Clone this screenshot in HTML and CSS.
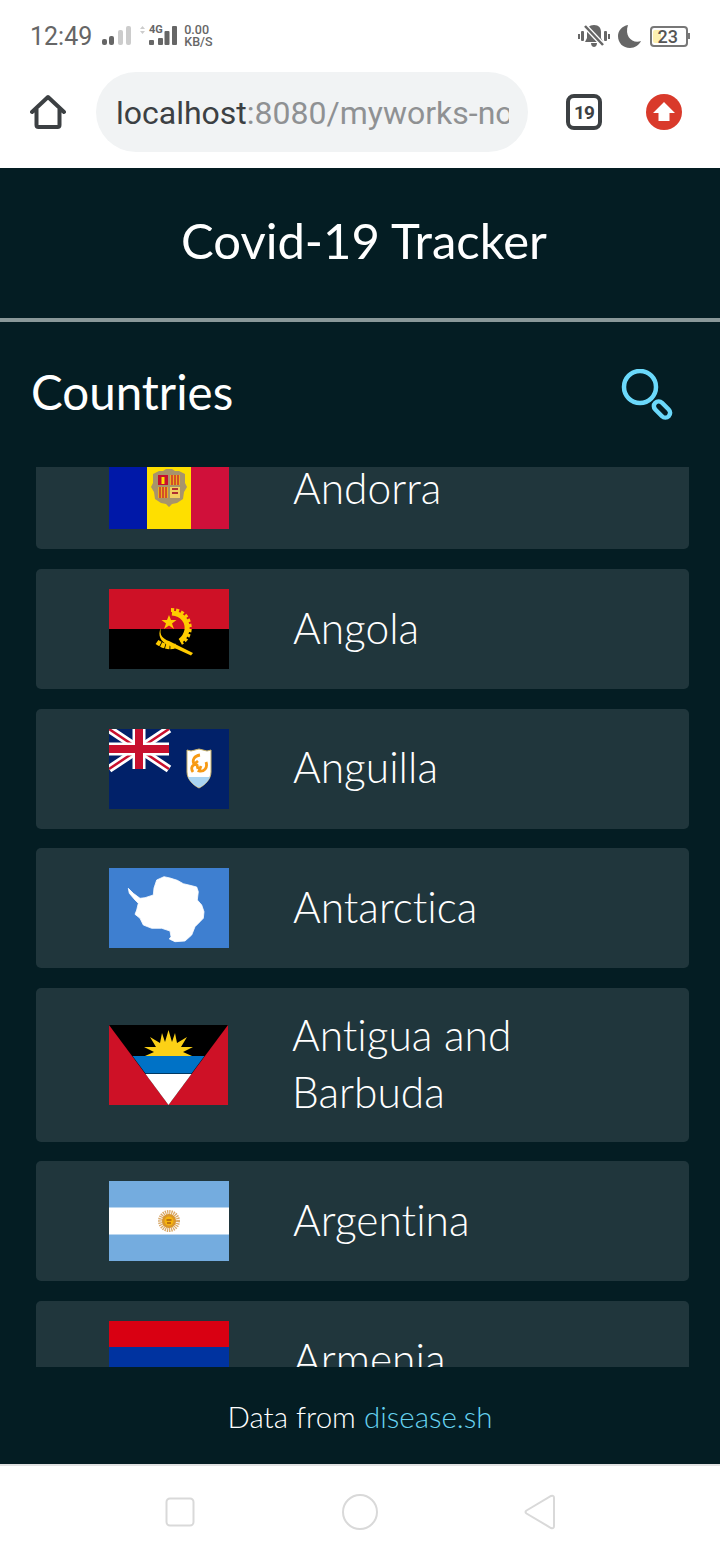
FILE: index.html
```html
<!DOCTYPE html>
<html lang="en">
<head>
    <meta charset="UTF-8">
    <meta name="viewport" content="width=device-width, initial-scale=1.0">
    <title>Covid-19 Tracker</title>
    <link rel="stylesheet" href="styles.css">
</head>
<body>
    <div class="status-bar">
        <span class="clock">12:49</span>
        <svg class="signal-a" width="32" height="24" viewBox="0 0 32 24">
            <rect x="1" y="17" width="5" height="6" rx="2" fill="#666"/>
            <rect x="8" y="14" width="5" height="9" rx="2" fill="#666"/>
            <rect x="17" y="8" width="5" height="15" rx="2" fill="#ccc"/>
            <rect x="25" y="4" width="5" height="19" rx="2" fill="#ccc"/>
        </svg>
        <svg class="signal-b" width="40" height="24" viewBox="0 0 40 24">
            <path d="M3.500 4 L6 7 H1 Z M3.500 12 L6 9 H1 Z" fill="#ccc"/>
            <text x="10" y="11" class="tiny-4g">4G</text>
            <rect x="10" y="18" width="5" height="5" rx="1" fill="#666"/>
            <rect x="19" y="16" width="5" height="7" rx="1" fill="#666"/>
            <rect x="25.500" y="9" width="5" height="14" rx="1" fill="#666"/>
            <rect x="33" y="4" width="5" height="19" rx="1" fill="#666"/>
        </svg>
        <div class="speed"><span>0.00</span><span>KB/S</span></div>
        <div class="status-right">
            <svg width="32" height="24" viewBox="0 0 32 24">
                <rect x="0" y="10" width="2" height="5" fill="#666"/>
                <rect x="3" y="7" width="3" height="10" rx="1" fill="#666"/>
                <rect x="26" y="7" width="3" height="10" rx="1" fill="#666"/>
                <rect x="30" y="10" width="2" height="5" fill="#666"/>
                <path d="M16 1 C11 1 9 4 9 8 V14 L7 18 H25 L23 14 V8 C23 4 21 1 16 1 Z M13 19 H19 C19 22 17 23 16 23 C15 23 13 22 13 19 Z" fill="#666"/>
                <path d="M7 2 L25 21" stroke="#fff" stroke-width="5"/>
                <path d="M7 2 L25 21" stroke="#666" stroke-width="2.500"/>
            </svg>
            <svg class="moon" width="24" height="24" viewBox="0 0 24 24">
                <path d="M10 1 C4 2 0 7 0 12 C0 19 5 24 12 24 C17 24 21 21 23 17 C15 20 6 13 10 1 Z" fill="#666"/>
            </svg>
            <div class="battery"><span class="battery-fill"></span><span class="battery-num">23</span></div>
        </div>
    </div>

    <div class="toolbar">
        <svg class="home-icon" width="36" height="36" viewBox="0 0 36 36">
            <path d="M2 18 L18 3 L34 18 M6.500 15 V31 Q6.500 33 8.500 33 H27.500 Q29.500 33 29.500 31 V15" fill="none" stroke="#3c4043" stroke-width="4" stroke-linecap="round" stroke-linejoin="round"/>
        </svg>
        <div class="url-pill">
            <span class="url-text">localhost<span class="url-rest">:8080/myworks-no</span></span>
        </div>
        <div class="tab-count">19</div>
        <svg class="update-icon" width="36" height="36" viewBox="0 0 36 36">
            <circle cx="18" cy="18" r="18" fill="#d93a2b"/>
            <path d="M18 8 L29 19 H23.500 V27 H12.500 V19 H7 Z" fill="#fff"/>
        </svg>
    </div>

    <div class="app">
        <header class="app-header">
            <h1>Covid-19 Tracker</h1>
        </header>
        <div class="section-head">
            <h2>Countries</h2>
            <svg class="search-icon" width="54" height="54" viewBox="0 0 54 54">
                <circle cx="21" cy="18" r="16" fill="none" stroke="#6bd9fb" stroke-width="4.500"/>
                <rect x="-4.750" y="-9.500" width="9.500" height="19" rx="4.750" transform="translate(43 40.500) rotate(-45)" fill="none" stroke="#6bd9fb" stroke-width="4.500"/>
            </svg>
        </div>

        <div class="country-list">
            <div class="country-scroll">
                <div class="country-card">
                    <svg class="flag" viewBox="0 0 120 80">
                        <rect width="38" height="80" fill="#0018a8"/>
                        <rect x="38" width="44" height="80" fill="#fedf00"/>
                        <rect x="82" width="38" height="80" fill="#d0103a"/>
                        <path d="M44 25 L50 22 H54 L57 20 H63 L66 22 H70 L76 25 V34 L78 38 L75 43 L74 50 L68 54 L63 55 L60 58 L57 55 L52 54 L46 50 L45 43 L42 38 L44 34 Z" fill="#a8946a"/>
                        <rect x="49" y="26" width="10" height="10" fill="#c7102e"/>
                        <rect x="52.500" y="28" width="3" height="7" fill="#fedf00"/>
                        <rect x="61" y="26" width="10" height="10" fill="#e8b020"/>
                        <path d="M63 26 V36 M66 26 V36 M69 26 V36" stroke="#c7102e" stroke-width="1.200"/>
                        <rect x="49" y="38" width="10" height="11" fill="#e8b020"/>
                        <path d="M51 38 V49 M54 38 V49 M57 38 V49" stroke="#c7102e" stroke-width="1.200"/>
                        <rect x="61" y="38" width="10" height="11" fill="#f2d060"/>
                        <path d="M63 40 H69 M63 44 H69" stroke="#b03030" stroke-width="2"/>
                    </svg>
                    <span class="country-name">Andorra</span>
                </div>

                <div class="country-card">
                    <svg class="flag" viewBox="0 0 120 80">
                        <rect width="120" height="40" fill="#ce1126"/>
                        <rect y="40" width="120" height="40"/>
                        <path d="M63 24 C74 25 79 33 78 41 C77 46 74 50 71 52" fill="none" stroke="#ffcb00" stroke-width="5"/>
                        <path d="M62 21 C76 21 82 32 80.500 42 C79.500 48 76 52 72 54" fill="none" stroke="#ffcb00" stroke-width="4" stroke-dasharray="3 2"/>
                        <path d="M48 53 C54 57 60 59 67 57" fill="none" stroke="#ffcb00" stroke-width="5" stroke-dasharray="4 0.800"/>
                        <path d="M52 39 C50 46 54 50 60 52 L84 64 L82 66.500 L59 56 C52 53 48 46 52 39 Z" fill="#ffcb00"/>
                        <path d="M60 26 L62 31 H67.500 L63 34.500 L65 40 L60 36.500 L55 40 L57 34.500 L52.500 31 H58 Z" fill="#ffcb00"/>
                    </svg>
                    <span class="country-name">Angola</span>
                </div>

                <div class="country-card">
                    <svg class="flag" viewBox="0 0 120 80">
                        <rect width="120" height="80" fill="#012169"/>
                        <path d="M0 0 L60 40 M60 0 L0 40" stroke="#fff" stroke-width="8"/>
                        <path d="M0 0 L60 40 M60 0 L0 40" stroke="#c8102e" stroke-width="2.500"/>
                        <path d="M30 0 V40 M0 20 H60" stroke="#fff" stroke-width="13"/>
                        <path d="M30 0 V40 M0 20 H60" stroke="#c8102e" stroke-width="8"/>
                        <path d="M78 21 L82 22 L90 20 L98 22 L102 21 V43 C102 50 96 56 90 59 C84 56 78 50 78 43 Z" fill="#fff" stroke="#c9b26a"/>
                        <path d="M79 48 H101 C99 53 94 57 90 58.500 C86 57 81 53 79 48 Z" fill="#a9d4f2"/>
                        <path d="M91 26 C85 27 83 31 85 35 L89 32 M97 33 C99 39 95 43 90 42 L92 37 M84 43 C81 39 84 34 88 36 L89 40" fill="none" stroke="#f79a14" stroke-width="2.800"/>
                    </svg>
                    <span class="country-name">Anguilla</span>
                </div>

                <div class="country-card">
                    <svg class="flag" viewBox="0 0 120 80">
                        <rect width="120" height="80" fill="#3e7fd0"/>
                        <path d="M55 8.700 L47.700 12 L45 20 L44.300 27 L36 29.700 L31 30.300 L24.300 25.300 L19.300 20.300 L20.300 25.300 L26 32 L29.300 35.300 L27.700 42 L26 46.300 L31 50.300 L34.300 57 L42.700 60.300 L52.700 60.300 L61 63 L62 68.700 L60.300 71 L66 73.700 L76 73 L82.700 67 L86 58.700 L91 53.700 L94.300 50.300 L95 43.700 L92.700 37 L88.300 32 L89.300 23.700 L87.700 19 L81 17.300 L74.300 15.700 L68.300 12.300 L61 10 Z" fill="#fff" stroke="#fff" stroke-width="0.800" stroke-linejoin="round"/>
                    </svg>
                    <span class="country-name">Antarctica</span>
                </div>

                <div class="country-card">
                    <svg class="flag flag-narrow" viewBox="0 0 119 80" preserveAspectRatio="none">
                        <rect width="119" height="80" fill="#ce1126"/>
                        <path d="M0 0 H119 L59.500 80 Z"/>
                        <path d="M36 31 L45 27 L35 22 L47 22 L41 12 L51 18 L53 8 L56 17 L59.500 5 L63 17 L66 8 L68 18 L78 12 L72 22 L84 22 L74 27 L83 31 Z" fill="#fcd116"/>
                        <path d="M23.500 31 H95.500 L82.500 48.500 H36.500 Z" fill="#0072c6"/>
                        <path d="M36.500 49 H82.500 L59.500 80 Z" fill="#fff"/>
                    </svg>
                    <span class="country-name">Antigua and Barbuda</span>
                </div>

                <div class="country-card">
                    <svg class="flag" viewBox="0 0 120 80">
                        <rect width="120" height="80" fill="#74acdf"/>
                        <rect y="26.500" width="120" height="27" fill="#fff"/>
                        <circle cx="60" cy="40" r="8.500" fill="none" stroke="#d8a868" stroke-width="5" stroke-dasharray="1.200 0.800"/>
                        <circle cx="60" cy="40" r="7" fill="#d9962a"/>
                        <circle cx="60" cy="40" r="4.500" fill="#f6b40e"/>
                        <path d="M57.500 39 H62.500 M58 42 H62" stroke="#85340a" stroke-width="1"/>
                    </svg>
                    <span class="country-name">Argentina</span>
                </div>

                <div class="country-card">
                    <svg class="flag" viewBox="0 0 120 80">
                        <rect width="120" height="27" fill="#d90012"/>
                        <rect y="26" width="120" height="27" fill="#0033a0"/>
                        <rect y="53" width="120" height="27" fill="#f2a800"/>
                    </svg>
                    <span class="country-name">Armenia</span>
                </div>
            </div>
        </div>

        <footer class="app-footer">
            <span>Data from <a class="source-link" href="#">disease.sh</a></span>
        </footer>
    </div>

    <div class="nav-bar">
        <svg width="30" height="30" viewBox="0 0 30 30">
            <rect x="1.500" y="1.500" width="27" height="27" rx="3.500" fill="none" stroke="#d9d9d9" stroke-width="2"/>
        </svg>
        <svg width="36" height="36" viewBox="0 0 36 36">
            <circle cx="18" cy="18" r="17" fill="none" stroke="#d9d9d9" stroke-width="2"/>
        </svg>
        <svg width="32" height="36" viewBox="0 0 32 36">
            <path d="M2.500 16.500 L27 2 Q30 1 30 4 V32 Q30 35 27 34 L2.500 19.500 Q0.500 18 2.500 16.500 Z" fill="none" stroke="#d9d9d9" stroke-width="2"/>
        </svg>
    </div>
</body>
</html>
```

FILE: styles.css
```css
body {
    margin: 0;
    width: 720px;
    height: 1560px;
    display: flex;
    flex-direction: column;
    overflow: hidden;
    background: #fff;
    font-family: "Lato", "Liberation Sans", sans-serif;
    font-variant-ligatures: none;
}

/* phone chrome */
.status-bar {
    height: 72px;
    display: flex;
    align-items: center;
    padding: 0 30px;
    box-sizing: border-box;
    color: #666;
    font-family: "Roboto", sans-serif;
}
.clock {
    font-size: 25px;
    margin-right: 9px;
}
.signal-a {
    margin-bottom: 4px;
}
.signal-b {
    margin-left: 6px;
    margin-bottom: 4px;
}
.tiny-4g {
    font-family: "Roboto", sans-serif;
    font-size: 11px;
    font-weight: 700;
    fill: #666;
}
.speed {
    display: flex;
    flex-direction: column;
    margin-left: 5px;
    margin-bottom: 1px;
    font-size: 12.5px;
    font-weight: 500;
    line-height: 12px;
}
.status-right {
    margin-left: auto;
    display: flex;
    align-items: center;
    gap: 8px;
}
.battery {
    position: relative;
    width: 34px;
    height: 17px;
    border: 2px solid #777;
    border-radius: 4px;
    margin-right: 2px;
    display: flex;
    align-items: center;
    justify-content: flex-end;
    padding-right: 0;
    box-sizing: content-box;
    font-size: 18px;
    font-weight: 500;
    color: #555;
}
.battery::after {
    content: "";
    position: absolute;
    right: -4px;
    top: 5px;
    width: 2px;
    height: 6px;
    background: #777;
}
.battery-fill {
    position: absolute;
    left: 1px;
    top: 2px;
    width: 8px;
    height: 13px;
    border-radius: 2px;
    background: #fdf0b0;
}
.battery-num {
    position: relative;
    margin-right: 8px;
}

.toolbar {
    height: 96px;
    display: flex;
    align-items: flex-start;
    box-sizing: border-box;
    padding-left: 30px;
}
.home-icon {
    margin-top: 22px;
}
.url-pill {
    width: 432px;
    height: 80px;
    margin-left: 30px;
    padding: 2px 19px 0 20px;
    box-sizing: border-box;
    display: flex;
    align-items: center;
    background: #f1f3f4;
    border-radius: 40px;
    overflow: hidden;
}
.url-text {
    font-family: "Roboto", sans-serif;
    font-size: 32px;
    color: #3c4043;
    white-space: nowrap;
    overflow: hidden;
}
.url-rest {
    color: #8f9193;
}
.tab-count {
    width: 36px;
    height: 36px;
    margin: 22px 0 0 38px;
    box-sizing: border-box;
    border: 4px solid #3c4043;
    border-radius: 8px;
    display: flex;
    align-items: center;
    justify-content: center;
    font-family: "Roboto", sans-serif;
    font-size: 19px;
    font-weight: 700;
    letter-spacing: -1px;
    color: #3c4043;
}
.update-icon {
    margin: 22px 0 0 44px;
}

/* tracker page */
.app {
    height: 1296px;
    display: flex;
    flex-direction: column;
    background: #041d23;
    color: #fff;
}
.app-header {
    height: 154px;
    box-sizing: border-box;
    padding-left: 8px;
    border-bottom: 4px solid #8a9899;
    display: flex;
    align-items: center;
    justify-content: center;
}
h1 {
    margin: 0 0 6px;
    font-size: 49px;
    font-weight: 400;
}
.section-head {
    height: 145px;
    padding: 0 47px 0 31px;
    display: flex;
    align-items: center;
    justify-content: space-between;
}
h2 {
    margin: 0 0 6px;
    font-size: 47.5px;
    font-weight: 400;
}
.search-icon {
    margin-top: 2px;
}
.country-list {
    height: 900px;
    margin: 0 31px 0 36px;
    overflow: hidden;
}
.country-scroll {
    margin-top: -37.6px;
}
.country-card {
    display: flex;
    align-items: center;
    box-sizing: border-box;
    padding: 20px 40px 20px 73px;
    margin-bottom: 19.6px;
    background: #20363c;
    border-radius: 5px;
}
.flag {
    width: 120px;
    height: 80px;
    flex-shrink: 0;
    margin-right: 64px;
}
.flag-narrow {
    width: 119px;
}
.country-name {
    margin: -2px 0 2px;
    font-size: 42.5px;
    font-weight: 300;
    line-height: 57px;
}
.app-footer {
    flex: 1;
    display: flex;
    align-items: center;
    justify-content: center;
    font-size: 29.5px;
    font-weight: 300;
    padding-top: 2px;
}
.source-link {
    color: #66d2f0;
    text-decoration: none;
}

.nav-bar {
    flex: 1;
    border-top: 2px solid #e2e2e2;
    display: flex;
    align-items: center;
    justify-content: space-between;
    padding: 0 164px 2px 165px;
}
```
